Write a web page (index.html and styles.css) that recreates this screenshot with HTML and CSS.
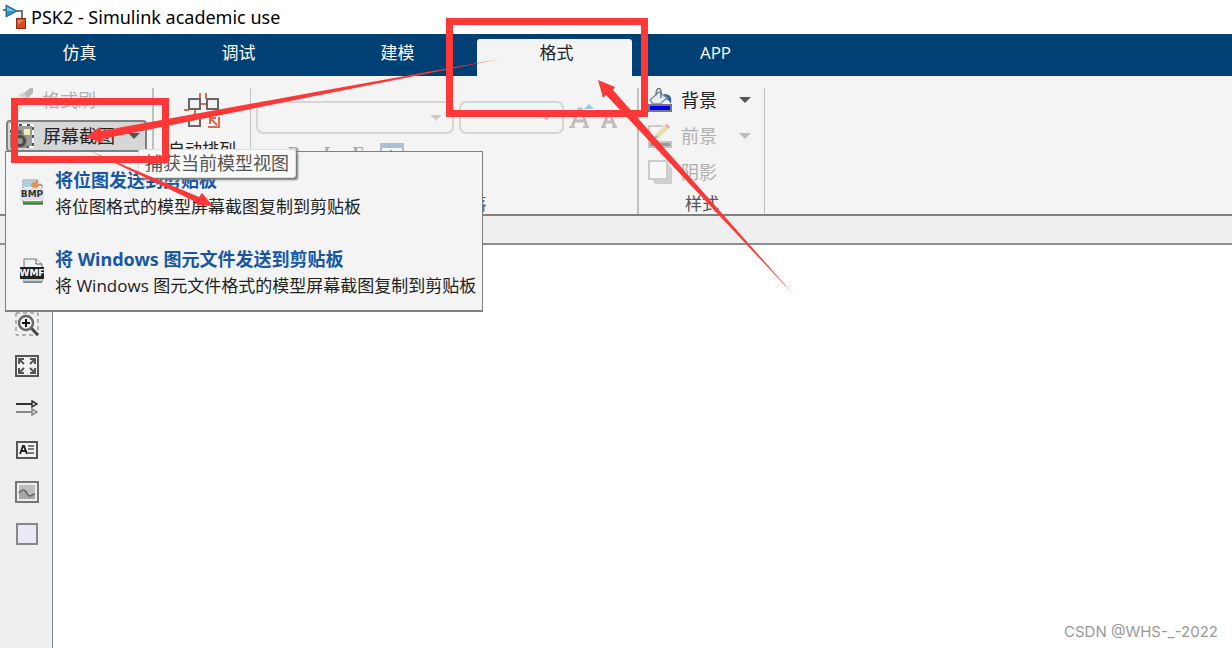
FILE: index.html
```html
<!DOCTYPE html>
<html lang="zh-CN">
<head>
<meta charset="utf-8">
<title>PSK2 - Simulink academic use</title>
<link rel="stylesheet" href="styles.css">
</head>
<body>
<div class="app">
  <header class="titlebar">
    <svg class="logo" width="24" height="26" viewBox="0 0 24 26">
      <path d="M0 6h3M14 7h5v8" fill="none" stroke="#777" stroke-width="2"/>
      <path d="M3 1l11 6-11 6z" fill="#2f93c9" stroke="#1b5f94"/>
      <path d="M4 3l7 4H4z" fill="#7cc5e6"/>
      <rect x="13.500" y="14.500" width="9" height="10" fill="#d94a1d" stroke="#8e2f14"/>
      <path d="M15 16h6l-6 5z" fill="#ef8055"/>
    </svg>
    <h1 class="title">PSK2 - Simulink academic use</h1>
  </header>

  <nav class="tabs">
    <button class="tab">仿真</button>
    <button class="tab">调试</button>
    <button class="tab">建模</button>
    <button class="tab tab-active">格式</button>
    <button class="tab">APP</button>
  </nav>

  <section class="ribbon">
    <div class="group group-copy">
      <button class="tool" disabled>
        <svg width="24" height="24" viewBox="0 0 24 24">
          <path d="M2 12l7-4 6 7-3 7-9-1 3-3z" fill="#ece5b4"/>
          <path d="M10 7l4-3 6 6-4 5z" fill="#d2d4d6"/>
          <path d="M15 5l6-5h3v5l-5 5z" fill="#b6b8ba"/>
        </svg>
        <span>格式刷</span>
      </button>
      <button class="tool tool-pressed">
        <svg width="24" height="24" viewBox="0 0 24 24">
          <rect x="1" y="1" width="22" height="22" fill="#9c9c9c" stroke="#fff" stroke-width="2"/>
          <rect x="1" y="1" width="22" height="22" fill="none" stroke="#555" stroke-width="2" stroke-dasharray="3 5"/>
          <path d="M0 10h17v14H0z" fill="#8a8a8a"/>
          <path d="M3 6h8l2 4H2z" fill="#666"/>
          <circle cx="10" cy="17" r="6" fill="#4a4a4a"/>
          <circle cx="10" cy="17" r="3" fill="#999"/>
          <path d="M14 5h6v6h-6z" fill="#f2efa8"/>
        </svg>
        <span>屏幕截图</span>
        <i class="caret"></i>
      </button>
    </div>

    <div class="group group-layout">
      <button class="tool-large">
        <svg width="36" height="36" viewBox="0 0 36 36">
          <path d="M16 0v6M22 0v6M0 17h5M16 11h8M11 17v7" fill="none" stroke="#df6a4c" stroke-width="2"/>
          <g fill="#f2f2f2" stroke="#666" stroke-width="2">
            <rect x="5" y="6" width="11" height="10"/>
            <rect x="23" y="6" width="11" height="10"/>
            <rect x="5" y="23" width="11" height="10"/>
          </g>
          <path d="M35 24v10H24M33 32l-7-7M26 31v-6h6" fill="none" stroke="#df6a4c" stroke-width="2"/>
        </svg>
        <span>自动排列</span>
      </button>
    </div>

    <div class="group group-font">
      <div class="font-row">
        <select class="combo combo-family" aria-label="字体" disabled></select>
        <select class="combo combo-size" aria-label="字号" disabled></select>
        <button class="icon-button" aria-label="增大字号" disabled>
          <svg width="26" height="28" viewBox="0 0 26 28">
            <path d="M3 26l7-18h2l6 18M6 20h10" fill="none" stroke="#bdbdbd" stroke-width="3"/>
            <path d="M0 26h6M14 26h6" stroke="#bdbdbd" stroke-width="2"/>
            <path d="M15 8l5-5 5 5z" fill="#9cc9de"/>
          </svg>
        </button>
        <button class="icon-button" aria-label="减小字号" disabled>
          <svg width="20" height="28" viewBox="0 0 20 28">
            <path d="M3 26l5-13h2l5 13M5 21h8" fill="none" stroke="#bdbdbd" stroke-width="3"/>
            <path d="M1 26h5M12 26h5" stroke="#bdbdbd" stroke-width="2"/>
          </svg>
        </button>
      </div>
      <div class="style-row">
        <button class="letter" disabled>B</button>
        <button class="letter letter-italic" disabled>I</button>
        <button class="letter" disabled>F</button>
        <button class="icon-button" aria-label="文本框" disabled>
          <svg width="24" height="22" viewBox="0 0 24 22">
            <rect x="1" y="1" width="22" height="20" fill="#f3f6f9" stroke="#b5bcc4" stroke-width="2"/>
            <path d="M1 1h22v4H1z" fill="#a9bfd2"/>
            <path d="M6 10h3M11 7v6M14 10h4" stroke="#999" stroke-width="2"/>
          </svg>
        </button>
      </div>
      <span class="group-label">字体和段落</span>
    </div>

    <div class="group group-style">
      <button class="tool">
        <svg width="24" height="24" viewBox="0 0 24 24">
          <path d="M16 6c7 0 8 4 7 10-2-4-4-5-7-5z" fill="#3565a5"/>
          <path d="M2 12l9-8 8 6-7 6H5z" fill="#e6edf3" stroke="#7b91a8" stroke-width="1.500"/>
          <path d="M8 7c0-8 5-8 5-3v6" fill="none" stroke="#667b92" stroke-width="1.500"/>
          <rect x="1" y="17" width="22" height="6" fill="#00f" stroke="#777" stroke-width="2"/>
        </svg>
        <span>背景</span>
        <i class="caret"></i>
      </button>
      <button class="tool" disabled>
        <svg width="24" height="24" viewBox="0 0 24 24">
          <path d="M1 17V2h14" fill="none" stroke="#ccc" stroke-width="2"/>
          <path d="M6 15l2-5L18 0l4 3-11 11z" fill="#ebdcab"/>
          <path d="M17 1l2-1 3 3-2 2z" fill="#e5aaa5"/>
          <path d="M6 15l2-4 2 2z" fill="#aaa"/>
          <rect x="1" y="18" width="22" height="5" fill="#999" stroke="#c4c4c4" stroke-width="2"/>
        </svg>
        <span>前景</span>
        <i class="caret"></i>
      </button>
      <button class="tool" disabled>
        <svg width="24" height="24" viewBox="0 0 24 24">
          <path d="M4 19h15V4l5 4v16H7z" fill="#cfcfcf"/>
          <rect x="1" y="1" width="18" height="18" fill="#f7f7f7" stroke="#ccc" stroke-width="2"/>
        </svg>
        <span>阴影</span>
      </button>
      <span class="group-label">样式</span>
    </div>

    <div class="menu" role="menu">
      <button class="menu-item" role="menuitem">
        <svg width="24" height="26" viewBox="0 0 24 26">
          <path d="M3 1h14l5 5v18H3z" fill="#eef4f7" stroke="#8d9ba3"/>
          <path d="M4 2h12l2 6H4z" fill="#a8d0e3"/>
          <path d="M17 1v5h5" fill="#fff" stroke="#555"/>
          <ellipse cx="15" cy="6" rx="4" ry="3" fill="#e9924d"/>
          <path d="M3 22h20v3H3z" fill="#56ae3d"/>
          <path d="M3 25h20" stroke="#333"/>
          <rect x="0" y="9" width="24" height="12" fill="#e2e2e2"/>
          <text class="badge badge-dark" x="12" y="18">BMP</text>
        </svg>
        <span class="menu-text">
          <strong>将位图发送到剪贴板</strong>
          <span>将位图格式的模型屏幕截图复制到剪贴板</span>
        </span>
      </button>
      <button class="menu-item" role="menuitem">
        <svg width="24" height="26" viewBox="0 0 24 26">
          <path d="M4 1h12l6 5v18H4z" fill="#edf2f4" stroke="#777"/>
          <path d="M16 1v5h6" fill="#fff" stroke="#555"/>
          <path d="M4 21h18v3H4z" fill="#b9d3df"/>
          <path d="M3 24h19" stroke="#555"/>
          <rect x="0" y="9" width="24" height="12" fill="#222"/>
          <text class="badge badge-light" x="12" y="18">WMF</text>
        </svg>
        <span class="menu-text">
          <strong>将 Windows 图元文件发送到剪贴板</strong>
          <span>将 Windows 图元文件格式的模型屏幕截图复制到剪贴板</span>
        </span>
      </button>
    </div>
    <div class="tooltip" role="tooltip">捕获当前模型视图</div>
  </section>

  <div class="strip"></div>

  <main class="workspace">
    <aside class="palette">
      <button class="palette-button" aria-label="放大">
        <svg width="24" height="24" viewBox="0 0 24 24">
          <rect x="1" y="1" width="22" height="22" fill="none" stroke="#777" stroke-dasharray="4 3"/>
          <path d="M16 16l7 7" stroke="#444" stroke-width="3"/>
          <circle cx="11" cy="11" r="7" fill="#f4f4f4" stroke="#666" stroke-width="2.500"/>
          <path d="M7 11h8M11 7v8" stroke="#111" stroke-width="2"/>
        </svg>
      </button>
      <button class="palette-button" aria-label="适应视图">
        <svg width="24" height="22" viewBox="0 0 24 22">
          <rect x="1" y="1" width="22" height="20" fill="#f2f2f2" stroke="#555" stroke-width="2"/>
          <path d="M4 9V4h5M4 4l5 5M15 4h5v5M20 4l-5 5M4 13v5h5M4 18l5-5M20 13v5h-5M20 18l-5-5" fill="none" stroke="#555" stroke-width="2"/>
        </svg>
      </button>
      <button class="palette-button" aria-label="信号线">
        <svg width="22" height="16" viewBox="0 0 22 16">
          <path d="M0 4h17" stroke="#333" stroke-width="2"/>
          <path d="M16 1l5 3-5 3z" fill="#eee" stroke="#333" stroke-width="1.500"/>
          <path d="M0 12h17" stroke="#888" stroke-width="2"/>
          <path d="M16 9l5 3-5 3z" fill="#eee" stroke="#888" stroke-width="1.500"/>
        </svg>
      </button>
      <button class="palette-button" aria-label="注释">
        <svg width="22" height="18" viewBox="0 0 22 18">
          <rect x="1" y="1" width="20" height="16" fill="#f3f3f3" stroke="#555" stroke-width="2"/>
          <path d="M4 13l3-8h1l3 8M5 10h5" fill="none" stroke="#222" stroke-width="2"/>
          <path d="M12 5h6M12 8h6M12 12h6" stroke="#555" stroke-width="1.500"/>
        </svg>
      </button>
      <button class="palette-button" aria-label="图像">
        <svg width="24" height="22" viewBox="0 0 24 22">
          <rect x="1" y="1" width="22" height="20" fill="#eee" stroke="#777" stroke-width="2"/>
          <rect x="4" y="4" width="16" height="14" fill="#bdbdbd"/>
          <path d="M4 16V12c4-6 7-2 9 2 2 3 4-1 7-1v5H4z" fill="#a6a6a6"/>
          <path d="M4 12c4-6 7-2 9 2 2 3 4-1 7-1" fill="none" stroke="#666" stroke-width="1.500"/>
        </svg>
      </button>
      <button class="palette-button" aria-label="区域">
        <svg width="22" height="22" viewBox="0 0 22 22">
          <rect x="1" y="1" width="20" height="20" fill="#e9e9f8" stroke="#888" stroke-width="2"/>
        </svg>
      </button>
    </aside>
    <div class="canvas">
      <span class="credit">CSDN @WHS-_-2022</span>
    </div>
  </main>

  <svg class="annotations" aria-hidden="true">
    <g fill="none" stroke="#fd3837" stroke-width="7">
      <rect x="449.500" y="21.500" width="195" height="92"/>
      <rect x="14.500" y="101.500" width="151" height="58"/>
    </g>
    <g fill="#fd3837">
      <path d="M85 137l15-10 1 4L310 93 500 59 310 97 102 139l1 4z"/>
      <path d="M90 151l109 46 3-4 11 13-16-1-1-3z"/>
      <path d="M598 80l17 7-2 3L794 295 606 95l-3 3z"/>
    </g>
  </svg>
</div>
</body>
</html>
```
FILE: styles.css
```css
* {
  box-sizing: border-box;
}

body {
  margin: 0;
  background: #fff;
  color: #222;
  font-family: "Open Sans", "Noto Sans CJK SC", sans-serif;
  font-size: 18px;
  line-height: 24px;
}

button {
  margin: 0;
  padding: 0;
  border: 0;
  background: none;
  color: inherit;
  font: inherit;
}

svg {
  display: block;
  flex: none;
}

.app {
  position: relative;
  display: flex;
  flex-direction: column;
  min-height: 100vh;
  overflow: hidden;
}

.titlebar {
  display: flex;
  align-items: center;
  gap: 4px;
  height: 34px;
  padding-left: 3px;
}

.title {
  margin: 0;
  color: #000;
  font-family: "Noto Sans", sans-serif;
  font-size: 18px;
  font-weight: 400;
}

.tabs {
  display: flex;
  height: 42px;
  padding-top: 5px;
  background: #004074;
  color: #fff;
  font-size: 17px;
}

.tab {
  width: 159px;
  padding-bottom: 10px;
}

.tab-active {
  width: 155px;
  margin-right: 4px;
  padding-left: 4px;
  border-radius: 3px 3px 0 0;
  background: #f4f4f4;
  color: #222;
}

.ribbon {
  position: relative;
  display: flex;
  height: 140px;
  padding-top: 12px;
  border-bottom: 2px solid #808080;
  background: #f4f4f4;
}

.group {
  border-right: 2px solid #c0c0c0;
}

.group-copy,
.group-style {
  display: grid;
  grid-template-rows: 24px 24px 24px 1fr;
  row-gap: 12px;
  align-items: center;
}

.group-copy {
  width: 154px;
  padding: 0 6px;
}

.group-layout {
  width: 97px;
  padding-top: 5px;
  border-right-width: 1px;
}

.group-font {
  display: flex;
  flex-direction: column;
  width: 388px;
  padding: 13px 5px 0;
}

.group-style {
  width: 126px;
  padding-left: 9px;
  border-right-width: 1px;
}

.tool {
  display: flex;
  align-items: center;
  gap: 9px;
  height: 32px;
  text-align: left;
}

.tool .caret {
  margin-left: auto;
}

.group-copy .tool {
  width: 141px;
  padding: 0 6px 0 3px;
}

.group-style .tool {
  width: 103px;
}

.tool:disabled {
  color: #b0b0b0;
}

.group-copy .tool-pressed {
  border: 2px solid #808080;
  border-radius: 4px;
  background: #d6d6d6;
  padding: 0 5px 0 2px;
}

.caret {
  border: 6px solid transparent;
  border-top-color: #555;
  border-bottom: 0;
}

.tool:disabled .caret {
  border-top-color: #bbb;
}

.tool-large {
  display: flex;
  flex-direction: column;
  align-items: center;
  gap: 9px;
  width: 100%;
  font-size: 17px;
}

.font-row {
  display: flex;
  gap: 5px;
  height: 33px;
}

.combo {
  height: 33px;
  border: 2px solid #c8c8c8;
  border-radius: 7px;
  appearance: none;
  background: linear-gradient(to bottom right, #bbb 50%, transparent 50%) right 10px top 12px / 6px 6px no-repeat,
    linear-gradient(to bottom left, #bbb 50%, transparent 50%) right 16px top 12px / 6px 6px no-repeat,
    #f4f4f4;
}

.combo-family {
  width: 198px;
}

.combo-size {
  width: 105px;
}

.icon-button {
  display: flex;
}

.style-row {
  display: flex;
  gap: 12px;
  padding: 9px 28px 0;
}

.letter {
  width: 20px;
  color: #aaa;
  font-family: "Liberation Serif", serif;
  font-weight: 700;
  line-height: 20px;
}

.letter-italic {
  font-style: italic;
}

.group-label {
  align-self: start;
  justify-self: center;
  color: #555;
  font-size: 17px;
  line-height: 16px;
}

.group-style .group-label {
  padding-right: 8px;
}

.group-font .group-label {
  align-self: center;
  margin-top: auto;
  padding-bottom: 2px;
}

.menu {
  position: absolute;
  top: 75px;
  left: 5px;
  width: 478px;
  padding: 16px 14px 12px;
  border: 1px solid #808080;
  border-bottom-width: 2px;
  background: #f4f4f4;
}

.menu-item {
  display: flex;
  align-items: flex-start;
  gap: 11px;
  text-align: left;
  white-space: nowrap;
}

.menu-item + .menu-item {
  margin-top: 28px;
}

.menu-item svg {
  margin-top: 11px;
}

.menu-text {
  display: flex;
  flex-direction: column;
  gap: 3px;
  font-size: 17px;
}

.menu-text strong {
  color: #1757a8;
  font-family: "Noto Sans", "Noto Sans CJK SC", sans-serif;
  font-size: 18px;
}

.badge {
  font: 700 9px "DejaVu Sans", sans-serif;
  text-anchor: middle;
}

.badge-dark {
  fill: #333;
}

.badge-light {
  fill: #fff;
}

.tooltip {
  position: absolute;
  top: 73px;
  left: 138px;
  padding: 1px 6px 2px 6px;
  border: 1px solid #ddd;
  border-radius: 3px;
  background: #f9f9f9;
  box-shadow: 2px 2px 2px #777;
  color: #555;
}

.strip {
  height: 29px;
  border-bottom: 2px solid #8b8f94;
  background: #efefef;
}

.workspace {
  display: flex;
  flex: 1;
}

.palette {
  display: flex;
  flex-direction: column;
  width: 53px;
  padding: 58px 0 0 2px;
  border-right: 1px solid #808890;
  background: #efefef;
}

.palette-button {
  display: grid;
  place-items: center;
  height: 42px;
}

.canvas {
  display: flex;
  flex: 1;
  align-items: flex-end;
  justify-content: flex-end;
  padding: 4px 14px;
}

.credit {
  color: #999;
  font-family: Inter, sans-serif;
  font-size: 15px;
}

.annotations {
  position: absolute;
  top: 0;
  left: 0;
  width: 100%;
  height: 100%;
  pointer-events: none;
}
```
